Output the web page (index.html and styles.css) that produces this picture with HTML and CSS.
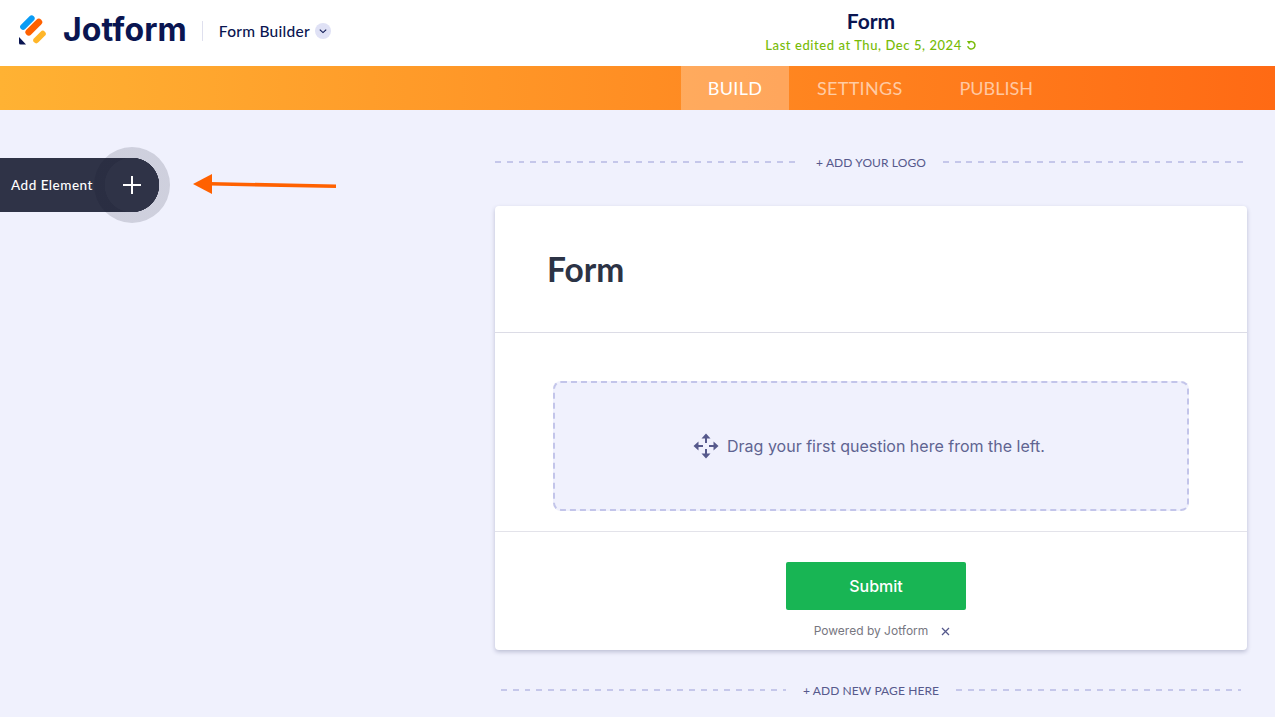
FILE: index.html
```html
<!DOCTYPE html>
<html lang="en">
<head>
<meta charset="utf-8">
<title>Form Builder - Jotform</title>
<link rel="stylesheet" href="styles.css">
</head>
<body>
<header class="topbar">
  <div class="brand">
    <svg class="logo-mark" viewBox="0 0 30 32" width="30" height="32" aria-hidden="true">
      <rect x="-3" y="-9" width="6" height="18" rx="3" transform="translate(9.4 8.6) rotate(45)" fill="#0a9cf5"/>
      <rect x="-3.4" y="-10.5" width="6.8" height="21" rx="3.4" transform="translate(15.8 13.2) rotate(45)" fill="#ff6100"/>
      <rect x="-3" y="-7.6" width="6" height="15.2" rx="3" transform="translate(21.5 23) rotate(45)" fill="#ffb629"/>
      <path d="M1 23 L8 30.5 L2.5 30.5 Q1 30.5 1 29 Z" fill="#0a1551"/>
    </svg>
    <span class="wordmark">Jotform</span>
    <span class="divider"></span>
    <span class="product">Form Builder</span>
    <span class="chev">
      <svg viewBox="0 0 16 16" width="16" height="16" aria-hidden="true"><path d="M4.8 6.6 L8 9.6 L11.2 6.6" fill="none" stroke="#0a1551" stroke-width="1.1"/></svg>
    </span>
  </div>
  <div class="title-block">
    <div class="doc-title">Form</div>
    <div class="edited">Last edited at Thu, Dec 5, 2024
      <svg viewBox="0 0 12 12" width="11" height="11" aria-hidden="true"><path d="M3 2.9 A4 4 0 1 1 1.9 6.6" fill="none" stroke="#78bb07" stroke-width="1.6"/><path d="M1 1 L5 1 L3.4 5 Z" fill="#78bb07"/></svg>
    </div>
  </div>
</header>
<nav class="navbar">
  <a class="tab tab-active">BUILD</a>
  <a class="tab tab-settings">SETTINGS</a>
  <a class="tab tab-publish">PUBLISH</a>
</nav>
<main class="canvas">
  <div class="add-element">
    <span class="add-label">Add Element</span>
    <span class="add-btn">
      <svg viewBox="0 0 20 20" width="20" height="20" aria-hidden="true"><path d="M10 1 V19 M1 10 H19" stroke="#fff" stroke-width="2"/></svg>
    </span>
  </div>
  <svg class="arrow" viewBox="0 0 146 22" width="146" height="22" aria-hidden="true">
    <path d="M1 10 L20 0 L20 20 Z" fill="#ff6100"/>
    <path d="M18 9.8 L144 12.2" stroke="#ff6100" stroke-width="3.6"/>
  </svg>
  <section class="form-col">
    <div class="slot slot-logo"><span class="dash"></span><span class="slot-text">+ ADD YOUR LOGO</span><span class="dash"></span></div>
    <div class="card">
      <h1 class="form-title">Form</h1>
      <div class="drop-wrap">
        <div class="dropzone">
          <svg viewBox="0 0 26 26" width="26" height="26" aria-hidden="true">
            <g fill="#56598c">
              <path d="M13 0.5 L17.5 5.5 L8.5 5.5 Z M13 25.5 L17.5 20.5 L8.5 20.5 Z M0.5 13 L5.5 8.5 L5.5 17.5 Z M25.5 13 L20.5 8.5 L20.5 17.5 Z"/>
            </g>
            <path d="M13 5 V10 M13 16 V21 M5 13 H10 M16 13 H21" stroke="#56598c" stroke-width="2" fill="none"/>
          </svg>
          <span>Drag your first question here from the left.</span>
        </div>
      </div>
      <div class="submit-wrap">
        <button class="submit" type="button">Submit</button>
        <div class="powered"><span>Powered by Jotform</span>
          <svg viewBox="0 0 9 9" width="9" height="9" aria-hidden="true"><path d="M1 1 L8 8 M8 1 L1 8" stroke="#56598c" stroke-width="1.3"/></svg>
        </div>
      </div>
    </div>
    <div class="slot slot-page"><span class="dash"></span><span class="slot-text">+ ADD NEW PAGE HERE</span><span class="dash"></span></div>
  </section>
</main>
</body>
</html>
```
FILE: styles.css
```css
* { box-sizing: border-box; }
html, body { margin: 0; height: 100%; }
body {
  width: 1275px;
  height: 717px;
  overflow: hidden;
  background: #f0f1fd;
  font-family: "Inter", "Liberation Sans", sans-serif;
  color: #0a1551;
}
.topbar {
  height: 66px;
  background: #fff;
  display: flex;
  position: relative;
}
.brand {
  display: flex;
  align-items: center;
  padding-left: 18px;
  height: 60px;
}
.logo-mark { flex: none; }
.wordmark {
  font-family: "Inter", sans-serif;
  font-weight: 700;
  font-size: 32px;
  letter-spacing: 0.1px;
  margin-left: 15px;
  margin-top: -2px;
}
.divider {
  width: 1px;
  height: 20px;
  background: #dfe0ee;
  margin: 2px 16px 0 15px;
}
.product {
  font-family: "Lato", sans-serif;
  font-weight: 500;
  font-size: 15.5px;
  letter-spacing: 0.25px;
  margin-top: 1px;
}
.chev {
  width: 16px;
  height: 16px;
  border-radius: 50%;
  background: #dfe1f5;
  margin-left: 5px;
  margin-top: 2px;
  display: flex;
}
.title-block {
  position: absolute;
  left: 640px;
  top: 0;
  width: 462px;
  text-align: center;
}
.doc-title {
  font-family: "Lato", sans-serif;
  font-weight: 700;
  font-size: 21px;
  line-height: 22px;
  margin-top: 10px;
}
.edited {
  font-family: "Lato", sans-serif;
  font-weight: 500;
  font-size: 13px;
  letter-spacing: 0.57px;
  line-height: 16px;
  color: #78bb07;
  margin-top: 5px;
}
.edited svg { vertical-align: -1px; }
.navbar {
  height: 44px;
  background: linear-gradient(90deg, #ffb233 0%, #ff6a14 100%);
  display: flex;
  padding-left: 681px;
}
.tab {
  font-family: "Lato", sans-serif;
  font-size: 18px;
  letter-spacing: 0.3px;
  line-height: 44px;
  color: rgba(255, 255, 255, 0.6);
}
.tab-active {
  width: 108px;
  text-align: center;
  background: rgba(255, 255, 255, 0.27);
  color: #fff;
}
.tab-settings { margin-left: 28px; }
.tab-publish { margin-left: 57px; letter-spacing: 0; }
.canvas {
  position: relative;
  height: 607px;
  display: flex;
  justify-content: flex-end;
  padding-right: 28px;
}
.add-element {
  position: absolute;
  left: 0;
  top: 48px;
  width: 159px;
  height: 54px;
  background: #2f3347;
  border-radius: 0 27px 27px 0;
  display: flex;
  align-items: center;
  padding-left: 11px;
}
.add-label {
  font-family: "Lato", sans-serif;
  font-weight: 500;
  font-size: 13.5px;
  letter-spacing: 0.5px;
  color: #fff;
  position: relative;
  z-index: 1;
}
.add-btn {
  position: absolute;
  left: 94px;
  top: -11px;
  width: 76px;
  height: 76px;
  border-radius: 50%;
  background: radial-gradient(circle, #2f3347 0 27px, rgba(15, 18, 40, 0.15) 27.5px);
  display: flex;
  align-items: center;
  justify-content: center;
}
.arrow {
  position: absolute;
  left: 192px;
  top: 64px;
}
.form-col {
  width: 752px;
  display: flex;
  flex-direction: column;
}
.slot {
  display: flex;
  align-items: center;
  gap: 17px;
  font-family: "Lato", sans-serif;
  font-size: 12px;
  letter-spacing: 0.1px;
  color: #56598c;
}
.slot-text { flex: none; }
.dash {
  flex: 1;
  height: 2px;
  background: repeating-linear-gradient(90deg, #c5c7ea 0 5.9px, transparent 5.9px 11.75px);
}
.slot-logo { height: 22px; margin-top: 41px; }
.slot-page { height: 22px; margin: 29px 6px 0; }
.card {
  background: #fff;
  border-radius: 4px;
  box-shadow: 0 2px 4px rgba(37, 45, 91, 0.25);
  margin-top: 33px;
  height: 444px;
  display: flex;
  flex-direction: column;
}
.form-title {
  height: 127px;
  margin: 0;
  padding: 43px 0 0 52px;
  font-family: "Lato", sans-serif;
  font-weight: 700;
  font-size: 33.5px;
  line-height: 40px;
  color: #2c3345;
  border-bottom: 1px solid #dcdce6;
}
.drop-wrap {
  height: 199px;
  padding: 48px 58px 0;
  border-bottom: 1px solid #e3e3ea;
}
.dropzone {
  height: 130px;
  border: 2px dashed #c3c5ea;
  border-radius: 8px;
  background: #f0f1fd;
  display: flex;
  align-items: center;
  justify-content: center;
  gap: 8px;
  font-size: 16px;
  color: #5f6491;
  padding-right: 4px;
}
.submit-wrap {
  flex: 1;
  display: flex;
  flex-direction: column;
  align-items: center;
  padding: 30px 0 0 10px;
}
.submit {
  width: 180px;
  height: 48px;
  border: 0;
  border-radius: 2px;
  background: #18b554;
  color: #fff;
  font: 500 16px "Inter", sans-serif;
}
.powered {
  display: flex;
  align-items: center;
  gap: 13px;
  margin-top: 13px;
  font-size: 12px;
  line-height: 16px;
  color: #77777f;
  padding-left: 12px;
}
```
